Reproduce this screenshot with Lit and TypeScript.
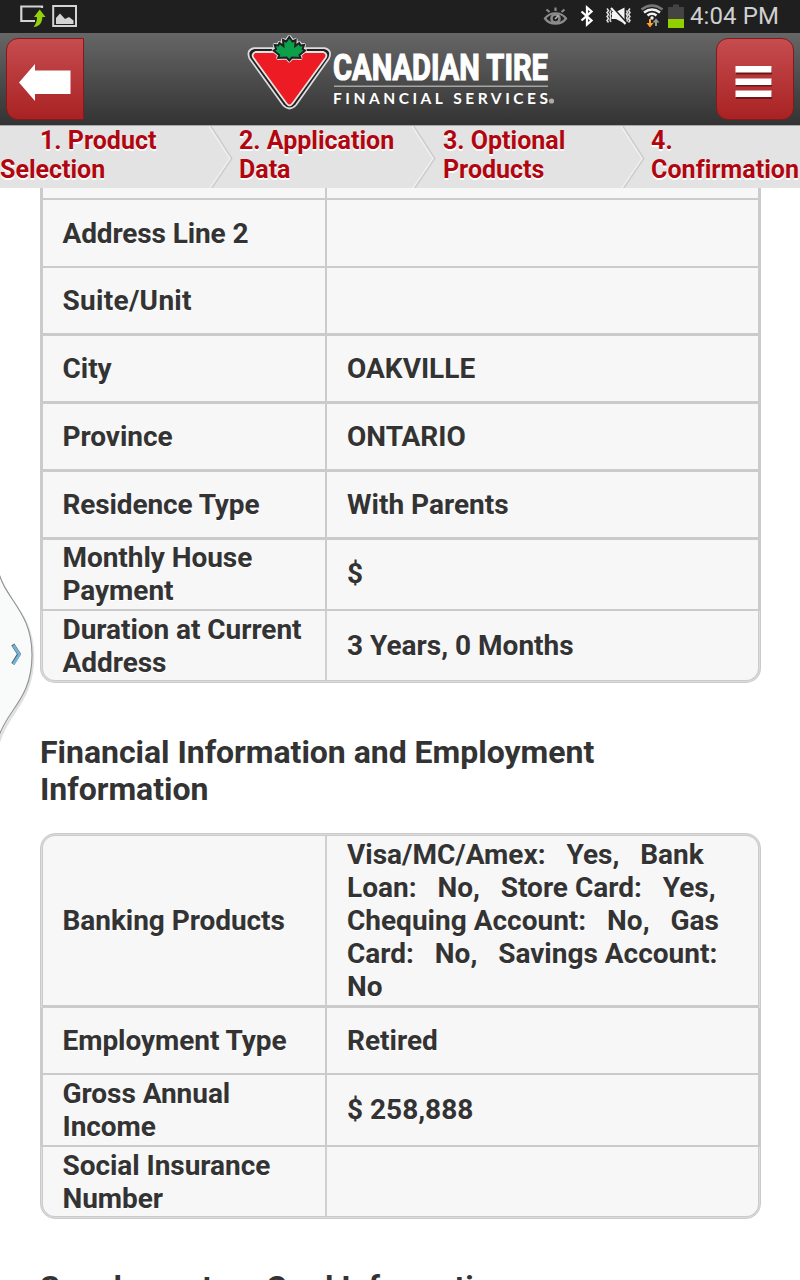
import { LitElement, html, css } from "lit";
import { customElement, property } from "lit/decorators.js";

type Row = {
  label: string; value: string; h: number; line: number;
  labelPad?: number; valuePad?: number; spacing?: number; end?: boolean;
};

const NB = "\u00a0";

const ADDRESS: Row[] = [
  { label: "", value: "", h: 14, line: 2 },
  { label: "Address Line 2", value: "", h: 68, line: 2, spacing: -0.12 },
  { label: "Suite/Unit", value: "", h: 68, line: 3, spacing: 0.3 },
  { label: "City", value: "OAKVILLE", h: 68, line: 3 },
  { label: "Province", value: "ONTARIO", h: 68, line: 3 },
  { label: "Residence Type", value: "With Parents", h: 68, line: 3, spacing: -0.12 },
  { label: "Monthly House Payment", value: "$", h: 71, line: 2, labelPad: 2, valuePad: 2 },
  { label: "Duration at Current Address", value: "3 Years, 0 Months", h: 69, line: 0, end: true },
];

const PRODUCTS =
  `Visa/MC/Amex:${NB}${NB} Yes,${NB}${NB} Bank Loan:${NB}${NB} No,${NB}${NB} Store Card:${NB}${NB} Yes,${NB}${NB} ` +
  `Chequing Account:${NB}${NB} No,${NB}${NB} Gas Card:${NB}${NB} No,${NB}${NB} Savings Account:${NB}${NB} No`;

const FINANCE: Row[] = [
  { label: "Banking Products", value: PRODUCTS, h: 172, line: 3, end: true },
  { label: "Employment Type", value: "Retired", h: 67, line: 2 },
  { label: "Gross Annual Income", value: "$ 258,888", h: 72, line: 2, valuePad: 2 },
  { label: "Social Insurance Number", value: "", h: 69, line: 0, end: true },
];

@customElement("status-bar")
class StatusBar extends LitElement {
  static styles = css`
    :host { display: flex; justify-content: space-between; height: 33px; background: #1f1f1f; flex: none; }
    svg { display: block; flex: none; }
    .right { display: flex; }
    .clock { width: 110px; font: 24px/32px Roboto, sans-serif; color: #d0d0d0; white-space: nowrap; letter-spacing: 0.1px; }
    .icons { margin-right: -1px; }
  `;
  render() {
    return html`
      <svg width="90" height="33" viewBox="0 0 90 33">
        <path d="M42 8V6.500H21.300V21H35" fill="none" stroke="#d4d4d4" stroke-width="2.200"/>
        <path d="M39.700 9.500L45.500 17H42.300C42.300 23 39 26.800 33.500 27C36 24 37 21.500 37 17H34Z" fill="#93d20a"/>
        <rect x="53.200" y="6" width="22.800" height="20" fill="none" stroke="#d4d4d4" stroke-width="2"/>
        <path d="M56 24V18L60 13.500L65 19L69 17L73.500 20.500V24Z" fill="#d4d4d4"/>
      </svg>
      <div class="right">
        <svg class="icons" width="151" height="33" viewBox="540 0 151 33">
          <g fill="none" stroke="#8b8b8b" stroke-width="2.200">
            <path d="M545 18.500C550 11.500 561 11.500 566 18.500C561 25.500 550 25.500 545 18.500Z"/>
            <circle cx="555.500" cy="18.500" r="4" stroke-width="2.600"/>
            <path d="M555.500 11V7.500M549.500 12L546.500 9.500M561.500 12L564.500 9.500"/>
          </g>
          <path d="M555 19L558.500 15.500" stroke="#bbb" stroke-width="1.500"/>
          <path d="M581.500 11.500L591.500 20.500L587 24.500V7.500L591.500 11.500L581.500 20.500" fill="none" stroke="#fff" stroke-width="2.300"/>
          <g fill="none" stroke="#dedede" stroke-width="1.500">
            <path d="M607 8.500l1.500 2l-1.500 2l1.500 2l-1.500 2l1.500 2l-1.500 2l1.500 2M611 10.500l-1 2l1 1.500l-1 2l1 2l-1 2l1 2M630 8.500l-1.500 2l1.500 2l-1.500 2l1.500 2l-1.500 2l1.500 2l-1.500 2M626.500 10.500l1 2l-1 1.500l1 2l-1 2l1 2l-1 2"/>
          </g>
          <path d="M612 12H616L624.500 7.500V23.500L616 19H612Z" fill="#f4f4f4"/>
          <path d="M612 7L627 23.500" stroke="#1f1f1f" stroke-width="2.200"/>
          <path d="M611 8L625.500 24" stroke="#f4f4f4" stroke-width="2.200"/>
          <g fill="none" stroke-width="2.600">
            <path d="M641.500 9.500Q652 1.500 662.500 9.500" stroke="#777"/>
            <path d="M644 12.500Q652 6.500 660 12.500M647.500 15.500Q652 12 656.500 15.500" stroke="#f2f2f2"/>
          </g>
          <circle cx="652" cy="18" r="1.700" fill="#f2f2f2"/>
          <path d="M649 19V23H646.500L650 27.500L653.500 23H651V19Z" fill="#ffa12b"/>
          <path d="M655 26V22.500H652.500L656 18.500L659.500 22.500H657V26Z" fill="#999"/>
          <path d="M668 7H673V4.500H679V7H684V28H668Z" fill="#444"/>
          <rect x="668" y="19" width="16" height="9" fill="#92d000"/>
        </svg>
        <div class="clock">4:04 PM</div>
      </div>`;
  }
}

@customElement("brand-header")
class BrandHeader extends LitElement {
  static styles = css`
    :host {
      display: flex; justify-content: space-between; height: 92px; flex: none;
      box-sizing: border-box; padding: 5px 6px 0 6px;
      background: linear-gradient(#666, #333);
    }
    .btn {
      box-sizing: border-box; width: 78px; height: 82px; border: 1.500px solid #841a1b;
      background: linear-gradient(#c64c4e, #a92223); display: flex;
    }
    .back { border-radius: 12px 0 0 12px; }
    .menu { border-radius: 12px; }
    svg { display: block; }
    .logo { margin: -5px 0 0 4px; }
    .name { font: bold 37.500px Roboto, sans-serif; fill: #fff; stroke: #fff; stroke-width: 1.200px; }
    .sub { font: bold 15.500px Lato, sans-serif; fill: #fff; }
  `;
  render() {
    return html`
      <div class="btn back">
        <svg width="75" height="79" viewBox="7 39 75 79">
          <path d="M19 82.500L35 64V70.500H70.500V94H35V101Z" fill="#fff"/>
        </svg>
      </div>
      <svg class="logo" width="316" height="92" viewBox="244 33 316 92">
        <path d="M254 48.200H324.500Q332.500 50 329 58.500L296 105Q289.500 112 283 105L249.500 58.500Q246 50 254 48.200Z" fill="#222" stroke="#ddd" stroke-width="1.800" stroke-linejoin="round"/>
        <path d="M255.500 52H323.500Q328 54 325.500 58L292.500 103.500Q289.500 107.500 286.500 103.500L253.500 58Q251 54 255.500 52Z" fill="#ed1c24" stroke="#e4e4e4" stroke-width="1.800"/>
        <path d="M289.300 37L292.500 41.500L295.700 40L295.200 46L299.200 43L300.500 45.500L304 45L302.700 49L305 50.500L299.500 55L300.500 58L292 57.500L289.300 60.500L286.600 57.500L278.200 58L279.200 55L273.700 50.500L276 49L274.700 45L278.200 45.500L279.500 43L283.500 46L283 40L286.200 41.500Z" fill="#202020" stroke="#ddd" stroke-width="4" stroke-linejoin="round"/>
        <path d="M289.300 37L292.500 41.500L295.700 40L295.200 46L299.200 43L300.500 45.500L304 45L302.700 49L305 50.500L299.500 55L300.500 58L292 57.500L289.300 60.500L286.600 57.500L278.200 58L279.200 55L273.700 50.500L276 49L274.700 45L278.200 45.500L279.500 43L283.500 46L283 40L286.200 41.500Z" fill="#0da04a" stroke="#202020" stroke-width="2"/>
        <text class="name" x="333" y="80" textLength="215" lengthAdjust="spacingAndGlyphs">CANADIAN TIRE</text>
        <rect x="334" y="85.500" width="214" height="1.500" fill="#a5a5a5"/>
        <text class="sub" x="333" y="103.500" textLength="215">FINANCIAL SERVICES</text>
        <circle cx="551.500" cy="101" r="2.600" fill="#aaa"/>
      </svg>
      <div class="btn menu">
        <svg width="75" height="79" viewBox="718 39 75 79">
          <path d="M737 67.500h36v7h-36zM737 79.500h36v7h-36zM737 92h36v7h-36z" fill="#701616"/>
          <path d="M736.500 66h36v6.500h-36zM736.500 78.500h36v6.500h-36zM736.500 90.500h36v6.500h-36z" fill="#fff"/>
        </svg>
      </div>`;
  }
}

@customElement("step-bar")
class StepBar extends LitElement {
  static styles = css`
    :host {
      display: grid; grid-template-columns: 209px 30px 173px 31px 178px 30px 149px; position: relative; z-index: 1;
      height: 63px; box-sizing: border-box; background: #e3e3e3; border-top: 1px solid #a9a9a9; flex: none;
      font: bold 25px/29px Roboto, sans-serif; color: #b1060f; text-shadow: 0 2px 0 #fff;
    }
    .step { white-space: nowrap; letter-spacing: 0; }
    .last { letter-spacing: 0.05px; }
    .first { text-indent: 40px; }
    svg { display: block; }
  `;
  private arrow() {
    return html`<svg width="30" height="62" viewBox="0 0 30 62">
      <path d="M1.500 0L22.500 32.500L2.500 62" fill="none" stroke="#cdcdcd" stroke-width="2"/>
      <path d="M0 0L21 32.500L1 62" fill="none" stroke="#f2f2f2" stroke-width="1.300"/>
    </svg>`;
  }
  render() {
    return html`
      <div class="step first">1. Product<br /><span>Selection</span></div>
      ${this.arrow()}
      <div class="step">2. Application<br />Data</div>
      ${this.arrow()}
      <div class="step">3. Optional<br />Products</div>
      ${this.arrow()}
      <div class="step last">4.<br />Confirmation</div>`;
  }
}

@customElement("info-table")
class InfoTable extends LitElement {
  @property({ attribute: false }) rows: Row[] = [];
  static styles = css`
    :host {
      display: block; box-sizing: border-box; width: 721px; margin-left: 40px; padding: 2px;
      border: 1px solid #cbcbcb; background: #f7f7f7; overflow: hidden;
      box-shadow: inset 0 0 0 1px #dcdcdc, inset 0 0 0 2px #cbcbcb;
      border-radius: 15px; font: bold 28px/33px Roboto, sans-serif; color: #333; text-shadow: 0 1px 0 #fff;
    }
    :host([open-top]) { border-top: 0; padding-top: 0; margin-top: -2px; border-radius: 0 0 15px 15px; }
    .row {
      display: grid; grid-template-columns: 284px 1fr; box-sizing: border-box; margin: 0 -2px;
      border: 0 solid #cbcbcb; border-left-width: 2px; border-right-width: 2px;
    }
    .end { margin: 0; border-left-width: 0; border-right-width: 0; }
    .end .label { border-right-color: #d0d0d0; }
    .cell { display: flex; align-items: center; padding: 0 20px; box-sizing: border-box; }
    .label { border-right: 2px solid #cbcbcb; padding: 0 10px 0 19.5px; }
  `;
  render() {
    return this.rows.map(
      (r) => html`<div class="row ${r.end ? "end" : ""}" style="height:${r.h}px;border-bottom-width:${r.line}px">
        <div class="cell label" style="padding-bottom:${r.labelPad ?? 0}px">
          <span style="letter-spacing:${r.spacing ?? -0.05}px">${r.label}</span>
        </div>
        <div class="cell value" style="padding-bottom:${r.valuePad ?? 0}px"><span>${r.value}</span></div>
      </div>`,
    );
  }
}

@customElement("app-root")
class AppRoot extends LitElement {
  static styles = css`
    :host { display: flex; flex-direction: column; position: relative; width: 800px; height: 1280px; overflow: hidden; background: #fff; }
    h2 { margin: 0; padding-left: 40px; font: bold 32px/37px Roboto, sans-serif; letter-spacing: -0.03px; color: #333; width: 620px; flex: none; }
    .finance { margin: 51px 0 25px; }
    .extra { margin-top: 50px; white-space: nowrap; }
    info-table { flex: none; }
    .handle { position: absolute; left: 0; top: 565px; display: block; }
  `;
  render() {
    return html`
      <status-bar></status-bar>
      <brand-header></brand-header>
      <step-bar></step-bar>
      <info-table open-top .rows=${ADDRESS}></info-table>
      <h2 class="finance">Financial Information and Employment Information</h2>
      <info-table .rows=${FINANCE}></info-table>
      <h2 class="extra">Supplementary Card Information</h2>
      <svg class="handle" width="40" height="185" viewBox="0 565 40 185">
        <path d="M-2 574C5 602 33 612 33 656.500C33 702 7 712 -1 742" fill="none" stroke="#000" stroke-opacity="0.120" stroke-width="2.500"/>
        <path d="M-2 570C5 600 32 611 32 655C32 700 6 710 -2 739Z" fill="#f9fbfb" stroke="#8f8f8f" stroke-width="1.100"/>
        <path d="M12.800 644.500L19 654L12.800 664" fill="none" stroke="#52626b" stroke-width="3.600"/>
        <path d="M13.300 645.300L19.500 654.500L13.300 664" fill="none" stroke="#72b5d8" stroke-width="2.600"/>
      </svg>`;
  }
}
